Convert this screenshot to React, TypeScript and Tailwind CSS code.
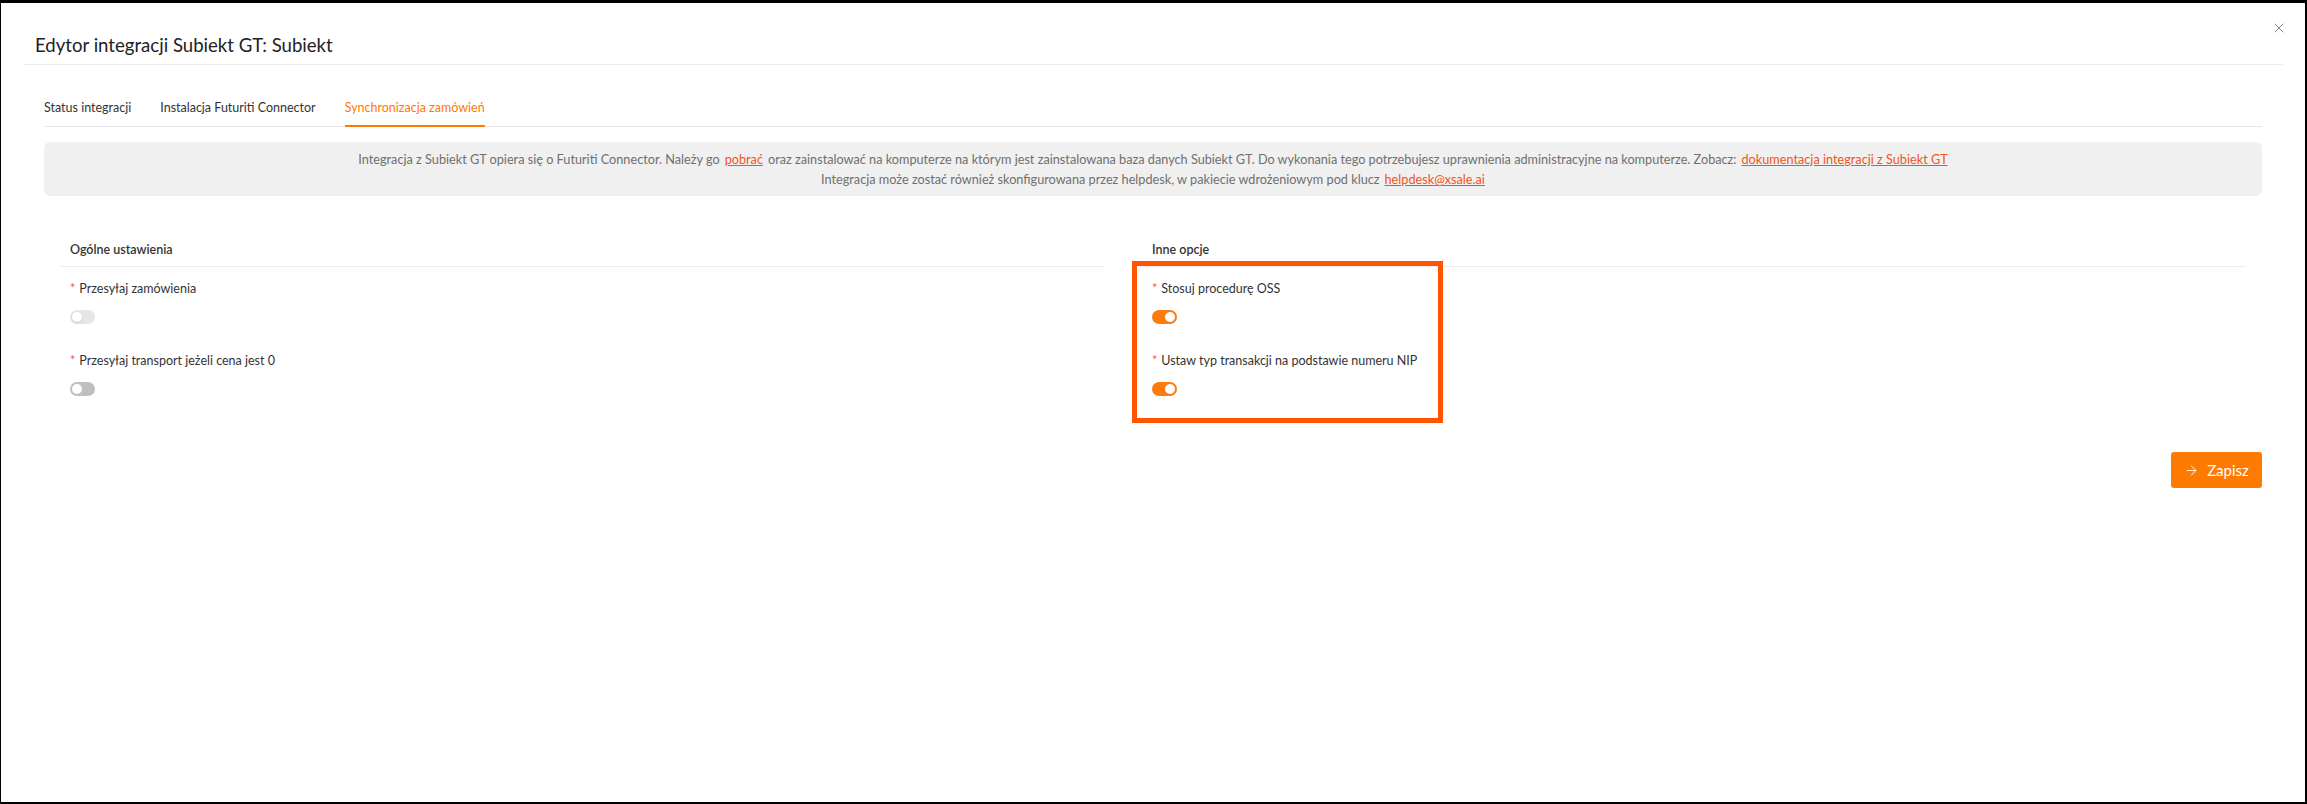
import { ArrowRight, X } from "lucide-react";

const font = { fontFamily: "Lato, 'Noto Sans', sans-serif" };

function Toggle({ on, disabled }: { on?: boolean; disabled?: boolean }) {
  const track = on ? "bg-[#ff7a0c] justify-end" : disabled ? "bg-[#e6e6e6] justify-start" : "bg-[#bfbfbf] justify-start";
  return (
    <div className={`flex h-[14px] w-[25px] items-center rounded-full px-[2px] ${track}`}>
      <div className={`h-[10px] w-[10px] rounded-full bg-white ${disabled ? "shadow-sm" : ""}`} />
    </div>
  );
}

function Field({ label, on, disabled }: { label: string; on?: boolean; disabled?: boolean }) {
  return (
    <div className="mb-[27px] px-[10px]">
      <div className="mb-[11px] text-[12.5px] leading-[20px] text-[#333]">
        <span className="mr-[4px] text-[#ff4d4f]">*</span>
        {label}
      </div>
      <Toggle on={on} disabled={disabled} />
    </div>
  );
}

export default function App() {
  const tabs = ["Status integracji", "Instalacja Futuriti Connector", "Synchronizacja zamówień"];

  return (
    <div style={font} className="relative h-[804px] w-full overflow-hidden border-b-2 border-l border-r-2 border-t-[3px] border-black bg-white">
      {/* Header */}
      <div className="mx-[22px] border-b border-[#ececec] pb-[7px] pl-[12px] pt-[30px]">
        <h1 className="text-[18.6px] font-normal leading-[24px] text-[#222]">Edytor integracji Subiekt GT: Subiekt</h1>
      </div>
      <button className="absolute right-[18px] top-[17px] text-[#666]">
        <X className="h-[16px] w-[16px]" strokeWidth={1.2} />
      </button>

      <div className="px-[43px]">
        {/* Tabs */}
        <div className="mt-[33px] flex gap-[29px] border-b border-[#e8e8e8]">
          {tabs.map((t, i) => (
            <div
              key={t}
              className={`-mb-px pb-[7px] text-[12.5px] leading-[20px] ${
                i === 2 ? "border-b-2 border-[#ff7a00] text-[#ff7a00]" : "border-b-2 border-transparent text-[#333]"
              }`}
            >
              {t}
            </div>
          ))}
        </div>

        {/* Info */}
        <div className="mt-[15px] rounded-[6px] bg-[#f0f0f0] py-[7px] text-center text-[12.7px] leading-[20px] text-[#6f6f6f]">
          <p>
            Integracja z Subiekt GT opiera się o Futuriti Connector. Należy go
            <a className="mx-[5px] text-[#f2541b] underline">pobrać</a>
            oraz zainstalować na komputerze na którym jest zainstalowana baza danych Subiekt GT. Do wykonania tego
            potrzebujesz uprawnienia administracyjne na komputerze. Zobacz:
            <a className="ml-[5px] text-[#f2541b] underline">dokumentacja integracji z Subiekt GT</a>
          </p>
          <p>
            Integracja może zostać również skonfigurowana przez helpdesk, w pakiecie wdrożeniowym pod klucz
            <a className="ml-[5px] text-[#f2541b] underline">helpdesk@xsale.ai</a>
          </p>
        </div>

        {/* Settings */}
        <div className="mt-[44px] flex gap-[36px] px-[16px]">
          <div className="w-[1044px]">
            <div className="mb-[12px] border-b border-[#ececec] px-[10px] pb-[6px] text-[12.5px] font-semibold leading-[20px] text-[#333]">
              Ogólne ustawienia
            </div>
            <Field label="Przesyłaj zamówienia" disabled />
            <Field label="Przesyłaj transport jeżeli cena jest 0" />
          </div>
          <div className="flex-1">
            <div className="mb-[12px] border-b border-[#ececec] px-[12px] pb-[6px] text-[12.5px] font-semibold leading-[20px] text-[#333]">
              Inne opcje
            </div>
            <div className="px-[2px]">
              <Field label="Stosuj procedurę OSS" on />
              <Field label="Ustaw typ transakcji na podstawie numeru NIP" on />
            </div>
          </div>
        </div>

        <div className="mt-[29px] flex justify-end">
          <button className="flex h-[36px] w-[91px] items-center justify-center gap-[8px] rounded-[3px] bg-[#ff7a00] text-[15px] text-white">
            <ArrowRight className="h-[15px] w-[15px]" strokeWidth={1.5} />
            Zapisz
          </button>
        </div>
      </div>

      {/* highlight annotation */}
      <div className="pointer-events-none absolute left-[1131px] top-[258px] h-[162px] w-[311px] border-[5px] border-[#ff5500]" />
    </div>
  );
}
